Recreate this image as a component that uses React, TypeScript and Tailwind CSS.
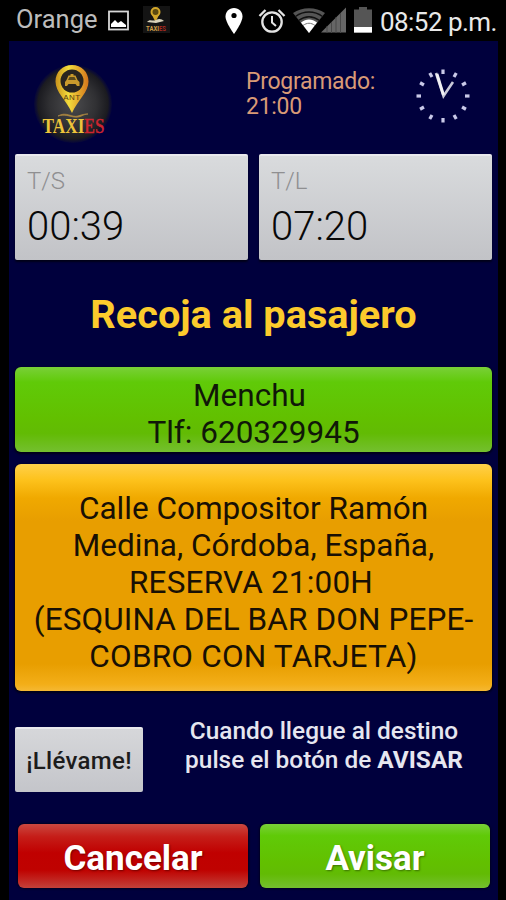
import type { ReactNode } from "react";

const StatusBar = () => {
  return (
    <div className="flex h-[41px] items-start text-white">
      <span className="ml-[16px] mt-[3px] w-[83px] whitespace-nowrap text-[25.5px] leading-[33px] text-[#bcbcbc]">
        Orange
      </span>
      <svg className="ml-[8px] mt-[9px]" width="23" height="23" viewBox="0 0 23 23">
        <rect x="2" y="2.5" width="19" height="18" fill="none" stroke="#d8d8d8" strokeWidth="1.8" />
        <path d="M4 18v-3l4-4 3 3 3-2 5 4v2z" fill="#fff" />
      </svg>
      <div className="ml-[13px] mt-[6px] bg-[#141414]">
        <svg width="27" height="27" viewBox="0 0 27 27">
          <circle cx="12.5" cy="6" r="4" fill="#5c4a10" stroke="#d3a72a" strokeWidth="2" />
          <path d="M9 9h7l-3.5 7z" fill="#d3a72a" />
          <path d="M4 16c3-4 6 0 9-2s6-1 8 1l-8 2z" fill="#d9d3bb" />
          <text x="3" y="25" fontSize="7.5" fontWeight="bold" fill="#d0a04a" textLength="20" lengthAdjust="spacingAndGlyphs">
            TAXI<tspan fill="#a82a20">ES</tspan>
          </text>
        </svg>
      </div>
      <svg className="ml-[54px] mt-[7px]" width="20" height="28" viewBox="0 0 20 28">
        <path
          d="M10 1C5 1 1.500 4.700 1.500 9.500 1.500 15.500 10 27 10 27s8.500-11.500 8.500-17.500C18.500 4.700 15 1 10 1z"
          fill="#fff"
        />
        <circle cx="10" cy="8.5" r="2.6" fill="#000" />
      </svg>
      <svg className="ml-[14px] mt-[8px]" width="28" height="27" viewBox="0 0 28 27" fill="none" stroke="#e4e4e4">
        <circle cx="14" cy="14" r="9.7" strokeWidth="2.3" />
        <path d="M14 8v6.500l4 3.500" strokeWidth="2" />
        <path d="M1.500 8l6-6M26.500 8l-6-6" strokeWidth="2.3" />
      </svg>
      <svg className="ml-[7px] mt-[7px]" width="32" height="27" viewBox="0 0 32 27">
        <path d="M0 6C9-.5 23-.5 32 6L16 26z" fill="#555" />
        <path d="M2.500 9.500c8-6 19-6 27 0M5.500 13.500c7-5 14-5 21 0" fill="none" stroke="#111" strokeWidth="1.3" />
        <path d="M8 15.500c5-4 11-4 16 0L16 26z" fill="#fff" />
        <path d="M10 18.500c4-3 8-3 12 0" fill="none" stroke="#777" strokeWidth="1" />
      </svg>
      <svg className="-ml-[4px] mt-[7px]" width="26" height="26" viewBox="0 0 26 26">
        <path d="M0 25.500L25 .5v25z" fill="#666" />
        <path d="M6 19v7M10.500 15v11M15 10v16M19.500 6v20" stroke="#484848" strokeWidth="1" />
      </svg>
      <svg className="ml-[7px] mt-[7px]" width="18" height="26" viewBox="0 0 18 26">
        <path d="M5 0h8v2.500h5V26H0V2.500h5z" fill="#555" />
        <path d="M0 20h18v5.500H0z" fill="#fff" />
      </svg>
      <span className="ml-[8px] mt-[5px] whitespace-nowrap text-[26px] leading-[34px] tracking-[-0.55px] text-[#e9e9e9]">
        08:52 p.m.
      </span>
    </div>
  );
};

const Logo = () => {
  return (
    <svg className="ml-[24px] mt-[21px]" width="82" height="84" viewBox="0 0 82 84">
      <defs>
        <radialGradient id="disc">
          <stop offset="0" stopColor="#4b4b4d" />
          <stop offset="0.6" stopColor="#303033" />
          <stop offset="0.9" stopColor="#1b1b20" />
          <stop offset="1" stopColor="#101032" stopOpacity="0.4" />
        </radialGradient>
        <linearGradient id="gold">
          <stop offset="0" stopColor="#c9921c" />
          <stop offset="0.4" stopColor="#f3dc3c" />
          <stop offset="1" stopColor="#d4751c" />
        </linearGradient>
      </defs>
      <circle cx="40" cy="42" r="39" fill="url(#disc)" />
      <path d="M39 3c-9.500 0-16.500 7-16.500 16.500C22.500 30 33 38 39 51c6-13 16.500-21 16.500-31.500C55.500 10 48.500 3 39 3z" fill="url(#gold)" />
      <circle cx="39" cy="19" r="11.5" fill="#29251f" />
      <path d="M32 20l1.500-2 2-4.500h2V12h3v1.500h2l2 4.500 2 2v4h-2.500l-1.500-2h-7l-1.500 2H32z" fill="#c99a2c" />
      <path d="M36.500 15h5l1.500 3h-8z" fill="#5b4a1c" />
      <text x="39" y="37.500" textAnchor="middle" fontSize="8" fill="#5a4212" fontFamily="Liberation Sans, sans-serif" letterSpacing="0.5">
        ANT
      </text>
      <path d="M25 54c8-5 14 2 20 0s8-2 10-2c-5 0-7 4-14 3-6-1-9-3-16-1z" fill="#b98a3a" stroke="#a58342" strokeWidth="0.8" />
      <text x="9.5" y="71" fontSize="20" fontWeight="bold" fill="#eec43a" fontFamily="Liberation Serif, serif" textLength="62" lengthAdjust="spacingAndGlyphs">
        TAXI<tspan fill="#cf2530" fontWeight="normal" stroke="#cf2530" strokeWidth="0.5">ES</tspan>
      </text>
    </svg>
  );
};

const ticks = [0, 30, 60, 90, 120, 150, 180, 210, 240, 270, 300, 330];

const Clock = () => {
  return (
    <svg className="absolute left-[405px] top-[26px]" width="58" height="58" viewBox="-29 -29 58 58">
      {ticks.map((angle) => (
        <path key={angle} d="M0-26.500v4.500" stroke="#c9c9e8" strokeWidth="3.2" transform={`rotate(${angle})`} />
      ))}
      <path d="M-7-23L.5 0 10-14" fill="none" stroke="#c9c9d8" strokeWidth="2.600" />
      <path d="M-6-22L.5-1" stroke="#f1f1f4" strokeWidth="2.8" />
    </svg>
  );
};

const TimeCard = ({ label, value }: { label: string; value: string }) => {
  return (
    <div className="h-[106px] w-[233px] rounded-[2px] border-t-2 border-[#e9e9ed] bg-linear-to-b from-[#d9dbdd] to-[#c2c3c7] pl-[12px] pt-[10px] shadow-[0_2px_2px_#000018]">
      <div className="text-[24px] font-light leading-[30px] text-[#8f8f91]">{label}</div>
      <div className="mt-[8px] text-[40px] font-light leading-[46px] text-[#080808]">{value}</div>
    </div>
  );
};

const green =
  "bg-[linear-gradient(#79d038_0,#60ca08_18%,#62c000_60%,#62bb04_78%,#74bf2f_100%)]";
const red =
  "bg-[linear-gradient(#cb4840_0,#c51d18_20%,#c00000_45%,#bf0200_72%,#c3413a_100%)]";

const ActionButton = ({ color, children }: { color: string; children: ReactNode }) => {
  return (
    <button
      className={`h-[64px] w-[230px] rounded-[6px] pt-[5px] text-[35px] leading-[50px] font-bold text-white shadow-[0_0_2px_1px_#000020] [text-shadow:1px_1px_2px_#0006] ${color}`}
    >
      {children}
    </button>
  );
};

export default function App() {
  return (
    <div className="h-[900px] w-[506px] overflow-hidden bg-black font-[Roboto,sans-serif]">
      <StatusBar />
      <main className="relative ml-[9px] flex h-[859px] w-[489px] flex-col bg-[#00003d]">
        <header className="flex h-[113px] items-start">
          <Logo />
          <div className="ml-[131px] mt-[28px] whitespace-nowrap text-[23px] leading-[25px] tracking-[-0.3px] text-[#d99a76]">
            Programado:
            <br />
            21:00
          </div>
          <Clock />
        </header>

        <section className="flex gap-[11px] pl-[6px]">
          <TimeCard label="T/S" value="00:39" />
          <TimeCard label="T/L" value="07:20" />
        </section>

        <h1 className="h-[107px] whitespace-nowrap text-center text-[39.7px] font-bold leading-[109px] text-[#fccb2c]">
          Recoja al pasajero
        </h1>

        <section
          className={`ml-[6px] h-[85px] w-[477px] rounded-[6px] pt-[10px] text-center text-[31.5px] leading-[37px] text-[#101808] shadow-[0_1px_2px_1px_#000018] ${green}`}
        >
          <div className="-ml-[8px]">Menchu</div>
          <div>Tlf: 620329945</div>
        </section>

        <section className="ml-[6px] mt-[12px] h-[227px] w-[477px] rounded-[6px] bg-[linear-gradient(#ffd04a_0,#fdc21c_7%,#f0a900_15%,#e89e00_25%,#e89e00_88%,#f3ae18_97%,#f5b833_100%)] pt-[26px] text-center text-[31.5px] leading-[37px] text-[#181004] shadow-[0_1px_2px_1px_#000018]">
          <div>Calle Compositor Ramón</div>
          <div>Medina, Córdoba, España,</div>
          <div className="-ml-[5px] tracking-[0.2px]">RESERVA 21:00H</div>
          <div className="whitespace-nowrap tracking-[0.1px]">(ESQUINA DEL BAR DON PEPE-</div>
          <div className="tracking-[0.2px]">COBRO CON TARJETA)</div>
        </section>

        <section className="flex h-[133px] items-start pl-[6px]">
          <button className="mt-[36px] h-[65px] w-[128px] whitespace-nowrap rounded-[2px] border-t-2 border-[#e9e9ed] bg-linear-to-b from-[#d6d7da] to-[#c4c5ca] text-[24px] font-medium tracking-[0.3px] text-[#1c1c1c]">
            ¡Llévame!
          </button>
          <p className="ml-[36px] mt-[25px] w-[290px] whitespace-nowrap text-center text-[24.4px] font-medium leading-[29px] text-[#e6e6f0]">
            Cuando llegue al destino
            <br />
            pulse el botón de <span className="font-bold">AVISAR</span>
          </p>
        </section>

        <footer className="flex gap-[12px] pl-[9px]">
          <ActionButton color={red}>Cancelar</ActionButton>
          <ActionButton color={green}>Avisar</ActionButton>
        </footer>
      </main>
    </div>
  );
}
